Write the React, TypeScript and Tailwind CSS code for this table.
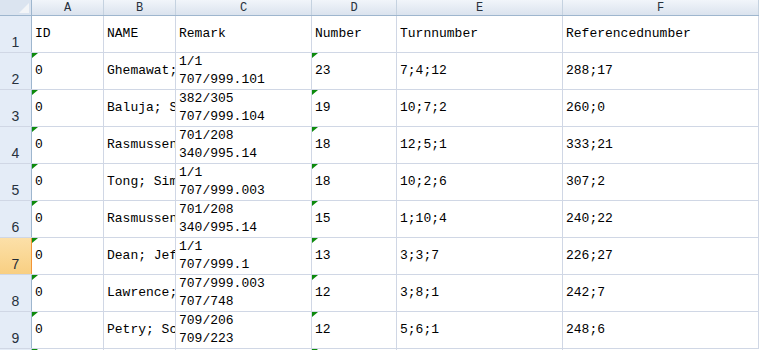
import React from 'react';

const mono = { fontFamily: '"Liberation Mono", "DejaVu Sans Mono", monospace' };

const rows = [
  { id: '0', name: 'Ghemawat; Sanjay', remark: ['1/1', '707/999.101'], num: '23', turn: '7;4;12', ref: '288;17' },
  { id: '0', name: 'Baluja; Shumeet', remark: ['382/305', '707/999.104'], num: '19', turn: '10;7;2', ref: '260;0' },
  { id: '0', name: 'Rasmussen; Edie', remark: ['701/208', '340/995.14'], num: '18', turn: '12;5;1', ref: '333;21' },
  { id: '0', name: 'Tong; Simon', remark: ['1/1', '707/999.003'], num: '18', turn: '10;2;6', ref: '307;2' },
  { id: '0', name: 'Rasmussen; Edie', remark: ['701/208', '340/995.14'], num: '15', turn: '1;10;4', ref: '240;22' },
  { id: '0', name: 'Dean; Jeffrey', remark: ['1/1', '707/999.1'], num: '13', turn: '3;3;7', ref: '226;27' },
  { id: '0', name: 'Lawrence; Steve', remark: ['707/999.003', '707/748'], num: '12', turn: '3;8;1', ref: '242;7' },
  { id: '0', name: 'Petry; Scott', remark: ['709/206', '709/223'], num: '12', turn: '5;6;1', ref: '248;6' },
];

function Flag() {
  return (
    <svg className="absolute left-0 top-0" width="6" height="5" viewBox="0 0 6 5">
      <polygon points="0,0 6,0 0,5" fill="#0d8a0d" />
    </svg>
  );
}

function Cell({ w, flag, children }: { w: string; flag?: boolean; children: React.ReactNode }) {
  return (
    <div className={`${w} relative flex h-full shrink-0 items-center overflow-hidden whitespace-nowrap border-r border-[#d0d7e5] pl-[3px] text-[13px] leading-[18px] text-black`}>
      {flag && <Flag />}
      <div>{children}</div>
    </div>
  );
}

const colHeads = [
  { l: 'A', w: 'w-[72px]' },
  { l: 'B', w: 'w-[72px]' },
  { l: 'C', w: 'w-[136px]' },
  { l: 'D', w: 'w-[85px]' },
  { l: 'E', w: 'w-[166px]' },
  { l: 'F', w: 'flex-1' },
];

function RowHead({ n, active }: { n: number; active?: boolean }) {
  return (
    <div
      className={
        active
          ? 'flex h-full w-[32px] shrink-0 items-end justify-center border-r border-[#f29436] bg-gradient-to-b from-[#fce0a8] to-[#f8cf82] pb-[3px] text-[14px] leading-[14px] text-[#1f2a35]'
          : 'flex h-full w-[32px] shrink-0 items-end justify-center border-r border-[#9eb6ce] bg-[#e4ecf7] pb-[3px] text-[14px] leading-[14px] text-[#27313d]'
      }
      style={{ fontFamily: '"Liberation Sans", Arial, sans-serif' }}
    >
      {n}
    </div>
  );
}

export default function App() {
  return (
    <div className="h-[350px] w-[759px] overflow-hidden bg-white" style={mono}>
      <div className="flex h-[16px] border-b border-[#9eb6ce] bg-gradient-to-b from-[#f1f5fa] to-[#dbe3ee]">
        <div className="relative h-full w-[32px] shrink-0 border-r border-[#9eb6ce] bg-[#dbe4f0]">
          <svg className="absolute bottom-[2px] right-[2px]" width="10" height="10" viewBox="0 0 10 10">
            <polygon points="10,0 10,10 0,10" fill="#f3f5f8" />
          </svg>
        </div>
        {colHeads.map((c) => (
          <div
            key={c.l}
            className={`${c.w} flex h-full shrink-0 items-center justify-center border-r border-[#c5d2e0] text-[12px] leading-[12px] text-[#27313d]`}
          >
            {c.l}
          </div>
        ))}
      </div>

      <div className="flex h-[37px] border-b border-[#d0d7e5]">
        <RowHead n={1} />
        <Cell w="w-[72px]">ID</Cell>
        <Cell w="w-[72px]">NAME</Cell>
        <Cell w="w-[136px]">Remark</Cell>
        <Cell w="w-[85px]">Number</Cell>
        <Cell w="w-[166px]">Turnnumber</Cell>
        <Cell w="flex-1">Referencednumber</Cell>
      </div>

      {rows.map((r, i) => (
        <div key={i} className="flex h-[37px] border-b border-[#d0d7e5]">
          <RowHead n={i + 2} active={i + 2 === 7} />
          <Cell w="w-[72px]" flag>{r.id}</Cell>
          <Cell w="w-[72px]">{r.name}</Cell>
          <Cell w="w-[136px]">
            <div>{r.remark[0]}</div>
            <div>{r.remark[1]}</div>
          </Cell>
          <Cell w="w-[85px]" flag>{r.num}</Cell>
          <Cell w="w-[166px]">{r.turn}</Cell>
          <Cell w="flex-1">{r.ref}</Cell>
        </div>
      ))}
      <div className="flex h-[20px]">
        <div className="h-full w-[32px] shrink-0 border-r border-[#9eb6ce] bg-[#e4ecf7]" />
        <div className="relative h-full w-[72px] shrink-0 border-r border-[#d0d7e5]"><Flag /></div>
        <div className="h-full w-[72px] shrink-0 border-r border-[#d0d7e5]" />
        <div className="h-full w-[136px] shrink-0 border-r border-[#d0d7e5]" />
        <div className="relative h-full w-[85px] shrink-0 border-r border-[#d0d7e5]"><Flag /></div>
        <div className="h-full w-[166px] shrink-0 border-r border-[#d0d7e5]" />
      </div>
    </div>
  );
}
